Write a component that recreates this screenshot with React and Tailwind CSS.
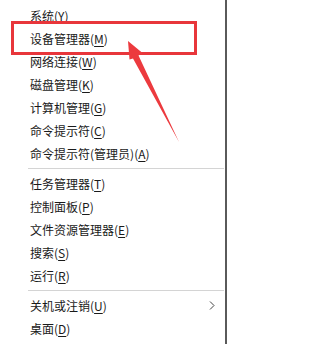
import React from 'react';

const groups = [
  [
    ['系统', 'Y'],
    ['设备管理器', 'M'],
    ['网络连接', 'W'],
    ['磁盘管理', 'K'],
    ['计算机管理', 'G'],
    ['命令提示符', 'C'],
    ['命令提示符(管理员)', 'A'],
  ],
  [
    ['任务管理器', 'T'],
    ['控制面板', 'P'],
    ['文件资源管理器', 'E'],
    ['搜索', 'S'],
    ['运行', 'R'],
  ],
  [
    ['关机或注销', 'U', true],
    ['桌面', 'D'],
  ],
];

function MenuItem({ label, hotkey, submenu }) {
  return (
    <div className="h-[23px] flex items-center pl-[30px] pr-[10px] text-[12px] text-[#1a1a1a] leading-none">
      <span className="flex-1 whitespace-nowrap">
        {label}(<span className="underline underline-offset-2">{hotkey}</span>)
      </span>
      {submenu && (
        <svg width="6" height="9" viewBox="0 0 6 9">
          <path d="M1 0.5 L5 4.5 L1 8.5" fill="none" stroke="#444" strokeWidth="1" />
        </svg>
      )}
    </div>
  );
}

export default function App() {
  return (
    <div className="relative w-[228px] h-[344px] bg-white overflow-hidden" style={{ fontFamily: '"Noto Sans CJK SC", "Noto Sans", sans-serif' }}>
      <div className="w-[227px] h-full border-r-2 border-[#5a5a5a] pt-[4px]">
        {groups.map((items, gi) => (
          <div key={gi}>
            {gi > 0 && (
              <div className="h-[7px] flex items-center pl-[28px] pr-[1px]">
                <div className="h-px w-full bg-[#d4d4d4]" />
              </div>
            )}
            {items.map(([label, hotkey, submenu]) => (
              <MenuItem key={label} label={label} hotkey={hotkey} submenu={submenu} />
            ))}
          </div>
        ))}
      </div>

      {/* red highlight box */}
      <div className="absolute left-[11px] top-[21px] w-[186px] h-[34px] border-[3px] border-[#e8363b]" />

      {/* red arrow */}
      <svg className="absolute left-0 top-0" width="228" height="344" viewBox="0 0 228 344">
        <polygon
          points="128,41 142.5,53 138.5,55.5 179,142 133,58.5 129.5,59.5"
          fill="#ec3a3e"
        />
      </svg>
    </div>
  );
}
